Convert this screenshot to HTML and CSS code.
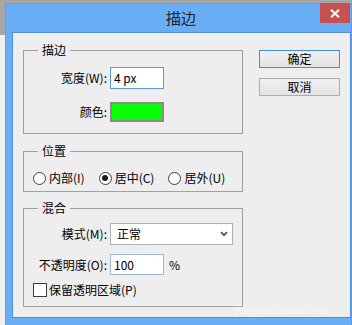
FILE: index.html
```html
<!DOCTYPE html>
<html lang="zh-CN">

<head>
    <meta charset="UTF-8">
    <meta name="viewport" content="width=device-width, initial-scale=1.0">
    <title>描边</title>
    <link rel="stylesheet" href="styles.css">
</head>

<body>
    <div class="window">
        <div class="titlebar">
            <span class="title">描边</span>
            <button class="close-btn" aria-label="关闭">
                <svg width="10" height="9" viewBox="0 0 10 9">
                    <path d="M1 0.8 L9 8.2 M9 0.8 L1 8.2" stroke="#fff" stroke-width="2" fill="none" />
                </svg>
            </button>
        </div>

        <div class="client">
            <div class="left-col">
                <fieldset class="group group-stroke">
                    <legend>描边</legend>
                    <div class="group-body">
                        <div class="row">
                            <label class="lbl">宽度(W):</label>
                            <div class="field field-focus">4 px</div>
                        </div>
                        <div class="row row-color">
                            <span class="lbl">颜色:</span>
                            <div class="swatch"></div>
                        </div>
                    </div>
                </fieldset>

                <fieldset class="group group-pos">
                    <legend>位置</legend>
                    <div class="group-body radios">
                        <label class="radio"><span class="circle"></span>内部(I)</label>
                        <label class="radio"><span class="circle checked"></span>居中(C)</label>
                        <label class="radio"><span class="circle"></span>居外(U)</label>
                    </div>
                </fieldset>

                <fieldset class="group group-blend">
                    <legend>混合</legend>
                    <div class="group-body">
                        <div class="row">
                            <label class="lbl">模式(M):</label>
                            <div class="select">
                                <span>正常</span>
                                <svg width="8" height="6" viewBox="0 0 8 6">
                                    <path d="M1 1.2 L4 4.2 L7 1.2" stroke="#555" stroke-width="1.8" fill="none" />
                                </svg>
                            </div>
                        </div>
                        <div class="row row-opacity">
                            <label class="lbl">不透明度(O):</label>
                            <div class="field">100</div>
                            <span class="unit">%</span>
                        </div>
                        <label class="check-row"><span class="checkbox"></span>保留透明区域(P)</label>
                    </div>
                </fieldset>
            </div>

            <div class="buttons">
                <button class="btn btn-default">确定</button>
                <button class="btn">取消</button>
            </div>
        </div>

        <div class="watermark">jingyan.baidu.com</div>
    </div>
</body>

</html>
```

FILE: styles.css
```css
* {
    margin: 0;
    padding: 0;
    box-sizing: border-box;
}

body {
    font-family: "Noto Sans CJK SC", sans-serif;
    font-size: 12px;
    color: #000;
    background: linear-gradient(#a6a6a6 0, #a6a6a6 35px, #efefef 35px);
    padding: 3px 0 0 5px;
    height: 325px;
    overflow: hidden;
}

.window {
    position: relative;
    width: 347px;
    height: 330px;
    background: #6aaef6;
    border: 1px solid #5c9fe8;
}

.titlebar {
    position: relative;
    height: 28px;
    line-height: 28px;
    text-align: center;
    padding-left: 5px;
}

.title {
    font-size: 15px;
    color: #1f1f1f;
}

.close-btn {
    position: absolute;
    top: -1px;
    right: 1px;
    width: 30px;
    height: 20px;
    border: none;
    background: #c75050;
    display: flex;
    align-items: center;
    justify-content: center;
    padding-top: 1px;
}

.client {
    display: flex;
    margin-left: 6px;
    width: 339px;
    height: 286px;
    background: #eeeeee;
    border: 1px solid #4f8fd6;
    padding: 10px 0 0 10px;
}

.left-col {
    width: 220px;
}

.group {
    border: 1px solid #a0a0a0;
    min-width: 0;
    padding: 0;
}

.group legend {
    margin-left: 14px;
    padding: 0 4px;
    line-height: 14px;
}

.group-pos {
    margin-top: 10px;
}

.group-blend {
    margin-top: 9px;
}

.group-stroke .group-body {
    padding: 10px 0 11px 0;
}

.row {
    display: flex;
    align-items: center;
}

.row-color {
    margin-top: 13px;
}

.lbl {
    width: 83px;
    margin-right: 3px;
    text-align: right;
    line-height: 14px;
}

.field {
    width: 54px;
    height: 21px;
    background: #fff;
    border: 1px solid #a3b6cf;
    padding-left: 3px;
    line-height: 19px;
}

.field-focus {
    height: 22px;
    line-height: 20px;
    border-color: #5a9be5;
}

.swatch {
    width: 54px;
    height: 20px;
    background: #08ff08;
    border: 2px solid #8c8c8c;
}

.radios {
    display: flex;
    align-items: center;
    height: 16px;
    margin: 12px 0 5px 0;
    padding-left: 9px;
}

.radio {
    display: flex;
    align-items: center;
    line-height: 14px;
    margin-right: 14px;
}

.circle {
    width: 13px;
    height: 13px;
    border: 1px solid #3c3c3c;
    border-radius: 50%;
    background: #fff;
    margin-right: 3px;
    display: flex;
    align-items: center;
    justify-content: center;
}

.circle.checked::after {
    content: "";
    width: 6px;
    height: 6px;
    border-radius: 50%;
    background: #1a1a1a;
}

.group-blend .group-body {
    padding: 8px 0 9px 0;
}

.select {
    width: 123px;
    height: 22px;
    background: #fff;
    border: 1px solid #acb0b8;
    display: flex;
    align-items: center;
    justify-content: space-between;
    padding: 0 4px 0 6px;
    line-height: 14px;
}

.row-opacity {
    margin-top: 9px;
}

.unit {
    margin-left: 5px;
}

.check-row {
    display: flex;
    align-items: center;
    margin-top: 8px;
    padding-left: 9px;
    height: 14px;
    line-height: 14px;
}

.checkbox {
    width: 14px;
    height: 14px;
    border: 1px solid #3c3c3c;
    background: #fff;
    margin-right: 2px;
}

.buttons {
    display: flex;
    flex-direction: column;
    gap: 10px;
    width: 81px;
    margin: 7px 0 0 16px;
}

.btn {
    height: 18px;
    font-family: inherit;
    font-size: 12px;
    line-height: 14px;
    color: #000;
    background: linear-gradient(#f0f0f0, #e3e3e3);
    border: 1px solid #adadad;
}

.btn-default {
    border-color: #3c8fe8;
}

.watermark {
    position: absolute;
    left: 228px;
    top: 299px;
    font-family: "Liberation Serif", serif;
    font-weight: bold;
    font-size: 12px;
    color: rgba(255, 255, 255, 0.4);
}
```
